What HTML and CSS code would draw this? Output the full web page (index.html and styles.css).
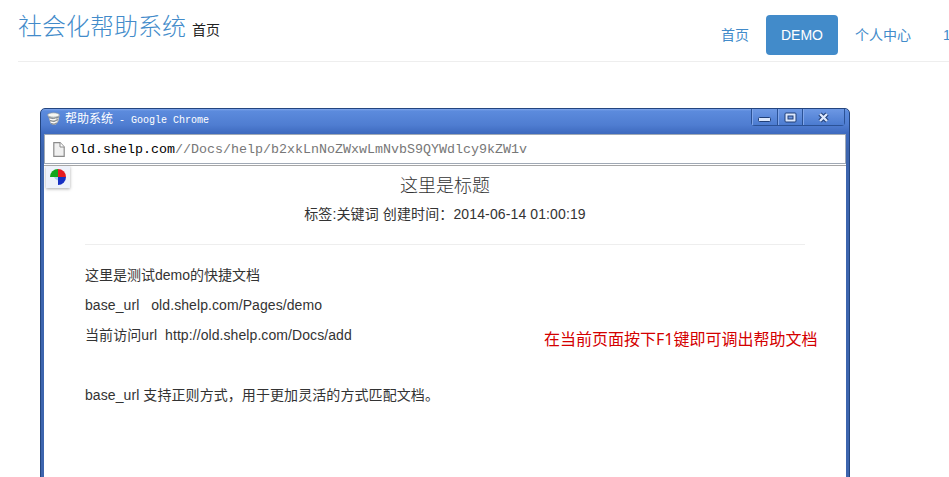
FILE: index.html
```html
<!DOCTYPE html>
<html lang="zh-CN">
<head>
<meta charset="utf-8">
<title>社会化帮助系统</title>
<link rel="stylesheet" href="styles.css">
</head>
<body>
<header class="header">
  <div class="brand"><a class="brand-name">社会化帮助系统</a><span class="brand-page">首页</span></div>
  <nav class="nav">
    <a class="nav-item">首页</a>
    <a class="nav-item active">DEMO</a>
    <a class="nav-item">个人中心</a>
    <a class="nav-item">1</a>
  </nav>
</header>
<main class="window">
  <div class="titlebar">
    <svg class="app-icon" width="14" height="14" viewBox="0 0 14 14">
      <path d="M1 3.5 3.500 11.5Q6.500 14 9.500 12L11.500 9 12.500 3Z" fill="#c9c8c2"/>
      <ellipse cx="6.500" cy="3" rx="6" ry="2.200" fill="#f6f6f2" stroke="#8a949e" stroke-width=".7"/>
      <path d="M1.500 5.500Q6 8 12 5M3 8.500Q7 11 11 7.500M4 11.500Q7 13.500 10 11" fill="none" stroke="#6e7a88" stroke-width=".8"/>
      <path d="M3 7.300Q6 8.500 9 7M4 10.300Q7 11.500 10 9.600" fill="none" stroke="#fff" stroke-width="1"/>
    </svg>
    <span class="titlebar-text">帮助系统<span class="latin"> - Google Chrome</span></span>
    <div class="controls">
      <span class="control"><svg width="13" height="11" viewBox="0 0 13 11"><rect x=".5" y="5.500" width="12" height="4" rx="1" fill="#dce8fc" stroke="#203f78"/></svg></span>
      <span class="control"><svg width="13" height="11" viewBox="0 0 13 11"><rect x="1" y="1" width="11" height="9" rx="1" fill="#dce8fc" stroke="#203f78"/><rect x="4" y="4" width="5" height="3" fill="#6e96df" stroke="#203f78"/></svg></span>
      <span class="control close"><svg width="13" height="11" viewBox="0 0 13 11"><path d="m3 2 7 7m0-7-7 7" stroke="#203f78" stroke-width="4.500"/><path d="m3 2 7 7m0-7-7 7" stroke="#dce8fc" stroke-width="2.400"/></svg></span>
    </div>
  </div>
  <div class="page">
    <div class="address">
      <svg class="page-icon" width="12" height="15" viewBox="0 0 12 15"><path d="M.8.700H7L11.200 5v9.300H.800Z" fill="#f0f0f0" stroke="#8b8b8b" stroke-width="1.200"/><path d="M7 .7V5h4.200" fill="#fff" stroke="#8b8b8b"/></svg>
      <span class="url"><b class="host">old.shelp.com</b>//Docs/help/b2xkLnNoZWxwLmNvbS9QYWdlcy9kZW1v</span>
    </div>
    <div class="badge"><svg width="16" height="16" viewBox="0 0 16 16"><path d="M8 8H0A8 8 0 0 1 8 0Z" fill="#12a51c"/><path d="M8 8V0a8 8 0 0 1 8 8Z" fill="#e51b23"/><path d="M8 8h8a8 8 0 0 1-8 8Z" fill="#1730c4"/><path d="M8 8v3.500A5 5 0 0 1 4 8Z" fill="#a9d4ef"/></svg></div>
    <article class="doc">
      <h4 class="doc-title">这里是标题</h4>
      <p class="meta">标签:关键词 创建时间：2014-06-14 01:00:19</p>
      <hr class="rule">
      <p class="line">这里是测试demo的快捷文档</p>
      <p class="line spaced">base_url   old.shelp.com/Pages/demo</p>
      <p class="line spaced">当前访问url  http://old.shelp.com/Docs/add</p>
      <p class="line">&nbsp;</p>
      <p class="line spaced">base_url 支持正则方式，用于更加灵活的方式匹配文档。</p>
    </article>
    <div class="hint">在当前页面按下<span class="key">F1</span>键即可调出帮助文档</div>
  </div>
</main>
</body>
</html>
```
FILE: styles.css
```css
* { box-sizing: border-box; }
body {
  margin: 0;
  height: 477px;
  overflow: hidden;
  background: #fff;
  color: #333;
  font: 14px/20px "Liberation Sans", "Noto Sans CJK SC", sans-serif;
}
.header {
  display: flex;
  height: 62px;
  margin-left: 18px;
  border-bottom: 1px solid #eee;
}
.brand { width: 688px; flex: none; padding-top: 9px; line-height: 32px; white-space: nowrap; }
.brand-name { font-size: 24px; font-weight: 300; color: #428bca; font-family: "Noto Sans CJK SC Light", "Noto Sans CJK SC", sans-serif; }
.brand-page { margin-left: 6px; color: #222; }
.nav { display: flex; gap: 2px; padding-top: 15px; white-space: nowrap; }
.nav-item { flex: none; height: 40px; padding: 10px 15px; border-radius: 4px; color: #428bca; }
.nav-item.active { background: #428bca; color: #fff; }
.window {
  width: 810px;
  height: 380px;
  margin: 46px 0 0 40px;
  padding: 0 4px;
  border: 1px solid #24457f;
  border-radius: 5px 5px 0 0;
  background: linear-gradient(#7fa6ea 0, #5c8bdd 2px, #4f7dd1 16px, #3f6bc0 24px, #3d65ae 40px);
}
.titlebar { display: flex; align-items: flex-start; height: 25px; padding-left: 2px; }
.app-icon { margin-top: 3px; }
.titlebar-text { margin-left: 4px; color: #fff; font-size: 12px; line-height: 20px; white-space: pre; }
.latin { font: 10px/20px "Liberation Mono", monospace; }
.controls { display: flex; height: 17px; margin-left: auto; border: 1px solid #2b5296; border-top: 0; border-radius: 0 0 4px 4px; }
.control { display: flex; align-items: center; justify-content: center; width: 25px; background: linear-gradient(#6d98e4, #4b7bd0); box-shadow: inset 1px 0 #82a7ea; }
.control + .control { border-left: 1px solid #2b5296; }
.close { width: 42px; }
.page { position: relative; height: 360px; margin: 0 -1px; background: #fff; }
.address { display: flex; align-items: center; height: 30px; padding: 0 8px; border: 1px solid #a0a9b5; box-shadow: 0 1px #fff, 0 2px #a6a6a6; }
.url { margin-left: 6px; padding-top: 2px; color: #777; font: 13.33px/20px "Liberation Mono", monospace; white-space: nowrap; }
.host { color: #000; font-weight: 400; }
.badge {
  position: absolute;
  top: 32px;
  left: 2px;
  display: grid;
  place-items: center;
  width: 24px;
  height: 22px;
  background: #eef2fb;
  box-shadow: 0 1px 3px #aaa;
}
.doc { padding: 10px 41px 0; }
.doc-title { margin: 0 0 10px; font-size: 18px; font-weight: 300; line-height: 20px; text-align: center; font-family: "Noto Sans CJK SC Light", "Noto Sans CJK SC", sans-serif; }
.meta { margin: 0; text-align: center; letter-spacing: .12px; }
.rule { height: 1px; margin: 20px 0; border: 0; background: #eee; }
.line { margin: 0 0 10px; white-space: pre; }
.spaced { letter-spacing: .08px; }
.hint { position: absolute; top: 194px; left: 500px; color: #d40000; font-size: 16px; line-height: 22px; white-space: nowrap; }
.key { font-family: "Noto Sans", sans-serif; }
```
